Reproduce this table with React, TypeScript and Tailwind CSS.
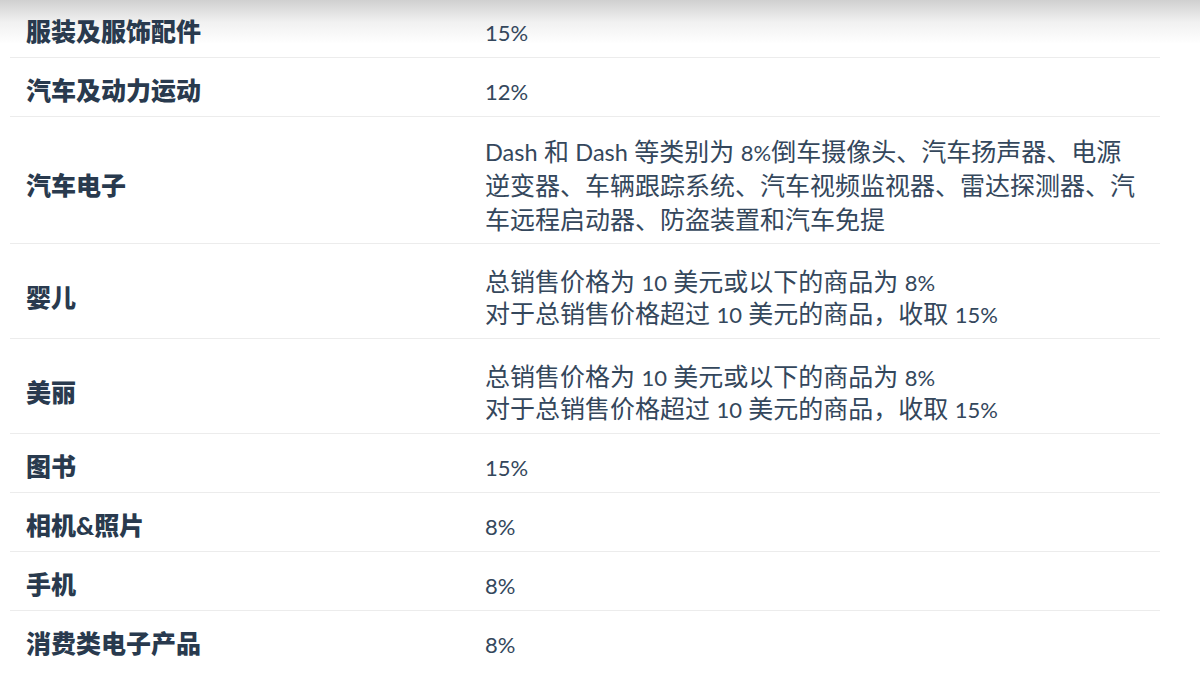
// App.tsx
type Kind = "single" | "double" | "triple";

type Row = {
  label: string;
  lines: string[];
  kind: Kind;
};

const rows: Row[] = [
  { label: "服装及服饰配件", lines: ["15%"], kind: "single" },
  { label: "汽车及动力运动", lines: ["12%"], kind: "single" },
  {
    label: "汽车电子",
    lines: [
      "Dash 和 Dash 等类别为 8%倒车摄像头、汽车扬声器、电源",
      "逆变器、车辆跟踪系统、汽车视频监视器、雷达探测器、汽",
      "车远程启动器、防盗装置和汽车免提",
    ],
    kind: "triple",
  },
  {
    label: "婴儿",
    lines: ["总销售价格为 10 美元或以下的商品为 8%", "对于总销售价格超过 10 美元的商品，收取 15%"],
    kind: "double",
  },
  {
    label: "美丽",
    lines: ["总销售价格为 10 美元或以下的商品为 8%", "对于总销售价格超过 10 美元的商品，收取 15%"],
    kind: "double",
  },
  { label: "图书", lines: ["15%"], kind: "single" },
  { label: "相机&照片", lines: ["8%"], kind: "single" },
  { label: "手机", lines: ["8%"], kind: "single" },
  { label: "消费类电子产品", lines: ["8%"], kind: "single" },
];

// padding + line height per row type, text sits a bit below the middle
const pad: Record<Kind, string> = {
  single: "pt-[16px] pb-[9px] leading-[33px]",
  double: "pt-[21px] pb-[9px] leading-[32px]",
  triple: "pt-[17px] pb-[7px] leading-[34px]",
};

// digits render smaller than the CJK glyphs in the original
function Mixed({ text }: { text: string }) {
  const parts = text.split(/([0-9%]+|[A-Za-z]+)/).filter(Boolean);
  return (
    <>
      {parts.map((p, i) => {
        if (/^[0-9%]+$/.test(p)) {
          return (
            <span key={i} className="text-[22px] leading-none">
              {p}
            </span>
          );
        }
        if (/^[A-Za-z]+$/.test(p)) {
          return (
            <span key={i} className="text-[23.5px] leading-none">
              {p}
            </span>
          );
        }
        return <span key={i}>{p}</span>;
      })}
    </>
  );
}

export default function App() {
  return (
    <div
      className="relative w-[1200px] h-[679px] overflow-hidden bg-white"
      style={{ fontFamily: 'Lato, "Noto Sans CJK SC", sans-serif' }}
    >
      {/* top fade shadow */}
      <div className="pointer-events-none absolute left-0 top-0 h-[44px] w-full bg-gradient-to-b from-[#d0d0d0] via-[#f1f1f1] to-white" />
      <table className="relative ml-[10px] -mt-[1px] w-[1150px] border-collapse">
        <tbody>
          {rows.map((row, idx) => (
            <tr key={row.label} className={idx < rows.length - 1 ? "border-b border-[#ececec]" : ""}>
              <td className={`w-[475px] pl-4 align-middle text-[25px] font-black text-[#293a4e] ${pad[row.kind]}`}>
                {row.label}
              </td>
              <td className={`pr-4 align-middle whitespace-nowrap text-[25px] text-[#34475c] ${pad[row.kind]}`}>
                {row.lines.map((line, i) => (
                  <div key={i}>
                    <Mixed text={line} />
                  </div>
                ))}
              </td>
            </tr>
          ))}
        </tbody>
      </table>
    </div>
  );
}
